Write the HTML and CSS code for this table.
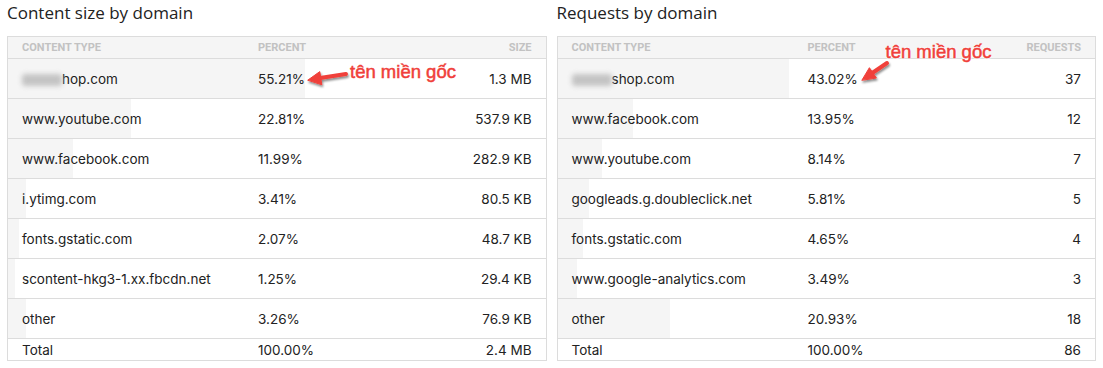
FILE: index.html
```html
<!DOCTYPE html>
<html>
<head>
<meta charset="utf-8">
<link rel="stylesheet" href="styles.css">
</head>
<body>
<div class="page">
  <section class="panel">
    <h2 class="title">Content size by domain</h2>
    <div class="table">
      <div class="row head"><span>Content type</span><span>Percent</span><span class="num">Size</span></div>
      <div class="row" style="--p:55.21%"><span><i class="blur"></i>hop.com</span><span>55.21%</span><span class="num">1.3 MB</span></div>
      <div class="row" style="--p:22.81%"><span>www.youtube.com</span><span>22.81%</span><span class="num">537.9 KB</span></div>
      <div class="row" style="--p:11.99%"><span>www.facebook.com</span><span>11.99%</span><span class="num">282.9 KB</span></div>
      <div class="row" style="--p:3.41%"><span>i.ytimg.com</span><span>3.41%</span><span class="num">80.5 KB</span></div>
      <div class="row" style="--p:2.07%"><span>fonts.gstatic.com</span><span>2.07%</span><span class="num">48.7 KB</span></div>
      <div class="row" style="--p:1.25%"><span>scontent-hkg3-1.xx.fbcdn.net</span><span>1.25%</span><span class="num">29.4 KB</span></div>
      <div class="row" style="--p:3.26%"><span>other</span><span>3.26%</span><span class="num">76.9 KB</span></div>
      <div class="row total"><span>Total</span><span>100.00%</span><span class="num">2.4 MB</span></div>
    </div>
    <div class="note note-left">tên miền gốc</div>
    <svg class="arrow arrow-left" width="60" height="30" viewBox="0 0 60 30">
      <defs><filter id="sh1" x="-30%" y="-50%" width="160%" height="200%"><feDropShadow dx="1" dy="2" stdDeviation="1.2" flood-color="#000" flood-opacity="0.45"/></filter></defs>
      <g filter="url(#sh1)" fill="#f0403a" stroke="#f0403a" stroke-linecap="round" stroke-linejoin="round">
        <line x1="44" y1="10" x2="18" y2="14" stroke-width="4"/>
        <polygon points="6,16 17.8,7.6 19.8,20.4" stroke-width="1"/>
      </g>
    </svg>
  </section>
  <section class="panel">
    <h2 class="title">Requests by domain</h2>
    <div class="table">
      <div class="row head"><span>Content type</span><span>Percent</span><span class="num">Requests</span></div>
      <div class="row" style="--p:43.02%"><span><i class="blur"></i>shop.com</span><span>43.02%</span><span class="num">37</span></div>
      <div class="row" style="--p:13.95%"><span>www.facebook.com</span><span>13.95%</span><span class="num">12</span></div>
      <div class="row" style="--p:8.14%"><span>www.youtube.com</span><span>8.14%</span><span class="num">7</span></div>
      <div class="row" style="--p:5.81%"><span>googleads.g.doubleclick.net</span><span>5.81%</span><span class="num">5</span></div>
      <div class="row" style="--p:4.65%"><span>fonts.gstatic.com</span><span>4.65%</span><span class="num">4</span></div>
      <div class="row" style="--p:3.49%"><span>www.google-analytics.com</span><span>3.49%</span><span class="num">3</span></div>
      <div class="row" style="--p:20.93%"><span>other</span><span>20.93%</span><span class="num">18</span></div>
      <div class="row total"><span>Total</span><span>100.00%</span><span class="num">86</span></div>
    </div>
    <div class="note note-right">tên miền gốc</div>
    <svg class="arrow arrow-right" width="40" height="36" viewBox="0 0 40 36">
      <defs><filter id="sh2" x="-50%" y="-50%" width="200%" height="200%"><feDropShadow dx="1" dy="2" stdDeviation="1.2" flood-color="#000" flood-opacity="0.45"/></filter></defs>
      <g filter="url(#sh2)" fill="#f0403a" stroke="#f0403a" stroke-linecap="round" stroke-linejoin="round">
        <line x1="31" y1="12" x2="17" y2="21.5" stroke-width="4"/>
        <polygon points="6,29 13.4,16.7 20.2,26.7" stroke-width="1"/>
      </g>
    </svg>
  </section>
</div>
</body>
</html>
```
FILE: styles.css
```css
html, body {
  margin: 0;
  padding: 0;
  background: #fff;
}
.page {
  display: flex;
  gap: 10px;
  padding: 1px 7px 0;
}
.panel {
  position: relative;
  width: 540px;
}
.title {
  margin: 0 0 11px;
  font-family: "Open Sans", "Liberation Sans", sans-serif;
  font-weight: 400;
  font-size: 17px;
  line-height: 24px;
  color: #222;
}
.table {
  border: 1px solid #dcdcdc;
}
.row {
  display: grid;
  grid-template-columns: 236px 1fr auto;
  align-items: center;
  height: 39px;
  padding: 0 14px;
  border-top: 1px solid #dcdcdc;
  font-family: "Inter", "Roboto", sans-serif;
  font-size: 13.5px;
  color: #222;
  background: linear-gradient(to right, #f5f5f5 var(--p, 0%), #fff var(--p, 0%));
}
.row.head {
  height: 21px;
  border-top: none;
  background: #f5f5f5;
  font-family: "Roboto", "Liberation Sans", sans-serif;
  font-weight: 700;
  font-size: 11px;
  text-transform: uppercase;
  color: #c2c2c2;
}
.row.total {
  height: 21px;
  background: #fff;
}
.num {
  text-align: right;
}
.blur {
  display: inline-block;
  width: 40px;
  height: 12px;
  vertical-align: -2px;
  background: #c4c4c4;
  filter: blur(2.5px);
  border-radius: 3px;
}
.note {
  position: absolute;
  font-family: "Liberation Sans", Arial, sans-serif;
  font-size: 18.5px;
  font-weight: 400;
  color: #f0403a;
  white-space: nowrap;
  text-shadow: 0 0 2px #fff, 0 0 2px #fff, 0 0 3px #fff;
  -webkit-text-stroke: 0.5px #f0403a;
}
.note-left {
  left: 343px;
  top: 60px;
}
.note-right {
  left: 329px;
  top: 40px;
}
.arrow {
  position: absolute;
}
.arrow-left {
  left: 295px;
  top: 63px;
}
.arrow-right {
  left: 299px;
  top: 50px;
}
```
